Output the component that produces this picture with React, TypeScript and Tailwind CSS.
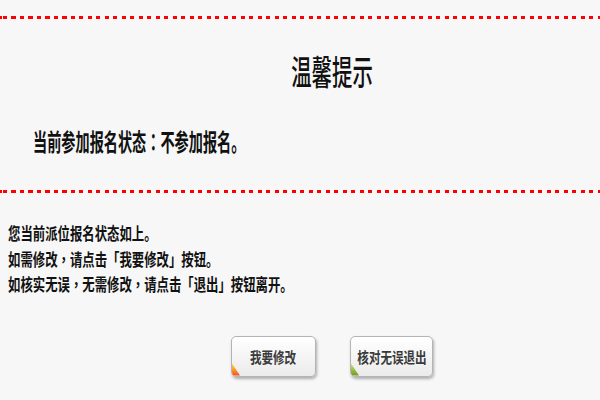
import React from 'react';

const DottedLine: React.FC = () => (
    <div className="h-[3px] w-full bg-[repeating-linear-gradient(90deg,#ff0000_0_4px,transparent_4px_8.5px)] bg-[position:3px_0]" />
);

// centred full-width punctuation, as in the reference
const P: React.FC<{ children: React.ReactNode }> = ({ children }) => (
    <span className="font-['Noto_Sans_CJK_TC',sans-serif]">{children}</span>
);

const TipButton: React.FC<{ label: string; width: string; corner: 'orange' | 'green' }> = ({ label, width, corner }) => (
    <button
        className={`relative h-[41px] ${width} rounded-[5px] border border-[#b4b4b4] bg-gradient-to-b from-white to-[#ebebeb] shadow-[1px_2px_3px_rgba(0,0,0,0.3)] flex items-center justify-center overflow-hidden`}
    >
        <span className="inline-block text-[15px] leading-none font-bold text-[#3a3a3a] scale-x-[0.77] whitespace-nowrap">{label}</span>
        {corner === 'orange' ? (
            <span className="absolute left-0 bottom-0 w-[8px] h-[12px] bg-gradient-to-b from-[#ffd23a] to-[#f2491a] [clip-path:polygon(0_0,0_100%,100%_100%)]" />
        ) : (
            <span className="absolute left-0 bottom-0 w-[8px] h-[12px] bg-gradient-to-b from-[#c9e26a] to-[#6a9a1c] [clip-path:polygon(0_0,0_100%,100%_100%)]" />
        )}
    </button>
);

const App: React.FC = () => {
    return (
        <div className="w-[600px] h-[400px] overflow-hidden bg-[#f7f7f7] text-[#111] font-['Noto_Sans_CJK_SC',sans-serif]">
            <div className="pt-4">
                <DottedLine />
            </div>

            {/* Title */}
            <div className="mt-[35px] pl-16 flex justify-center">
                <span className="inline-block text-[34px] leading-none font-medium scale-x-[0.6] whitespace-nowrap">温馨提示</span>
            </div>

            {/* Status */}
            <div className="mt-[41px] pl-[33px]">
                <span className="inline-block origin-left text-[24px] leading-none font-bold scale-x-[0.59] whitespace-nowrap">
                    当前参加报名状态<P>：</P>不参加报名。
                </span>
            </div>

            <div className="mt-[34px]">
                <DottedLine />
            </div>

            {/* Notice */}
            <div className="mt-[28px] pl-[8px] text-[16.5px] leading-[25.5px] font-bold">
                <div className="origin-left scale-x-[0.75] whitespace-nowrap">您当前派位报名状态如上。</div>
                <div className="origin-left scale-x-[0.75] whitespace-nowrap">如需修改<P>，</P>请点击「我要修改」按钮。</div>
                <div className="origin-left scale-x-[0.75] whitespace-nowrap">如核实无误<P>，</P>无需修改<P>，</P>请点击「退出」按钮离开。</div>
            </div>

            {/* Buttons */}
            <div className="mt-[38px] pl-16 flex justify-center gap-[34px]">
                <TipButton label="我要修改" width="w-[85px]" corner="orange" />
                <TipButton label="核对无误退出" width="w-[83px]" corner="green" />
            </div>
        </div>
    );
};

export default App;
